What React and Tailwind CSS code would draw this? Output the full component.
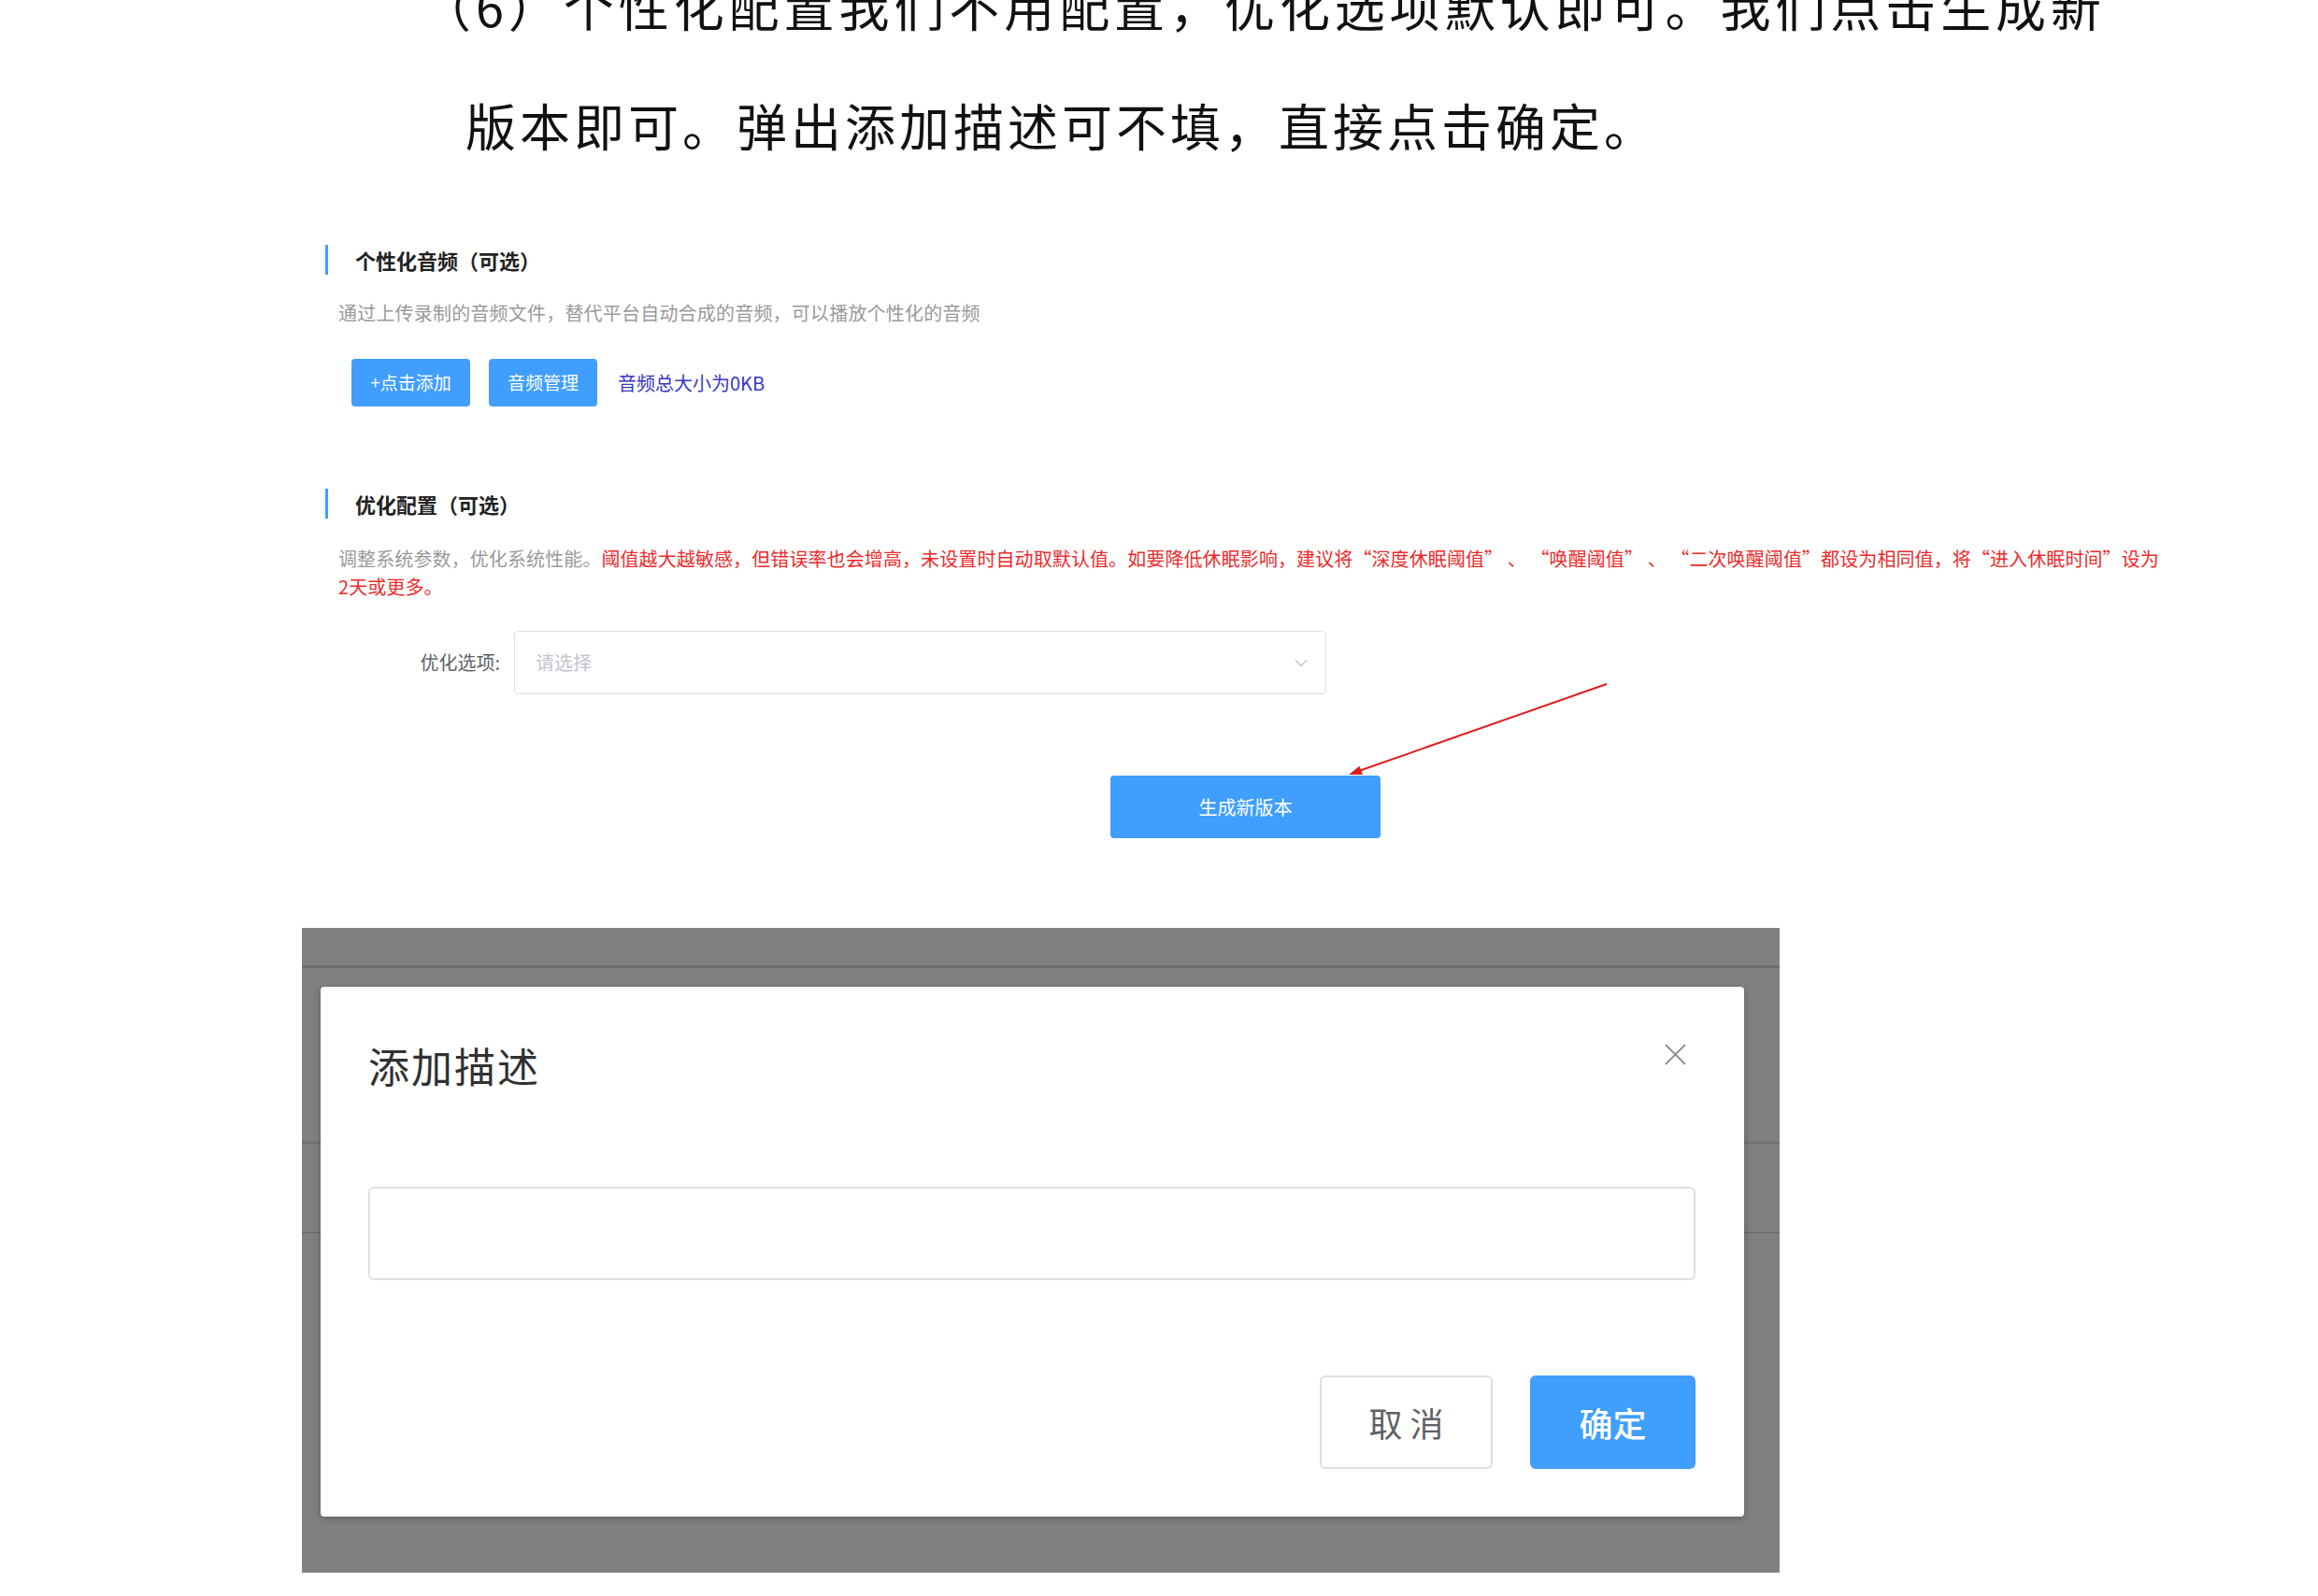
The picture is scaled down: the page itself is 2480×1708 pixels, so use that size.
export default function App() {
  return (
    <div className="w-[2480px] h-[1708px] overflow-hidden bg-white relative flex flex-col font-['Noto_Sans_CJK_SC','Noto_Sans',sans-serif] text-black">
      {/* top document text */}
      <div className="mt-[-58px] ml-[450px] w-[1798px] h-[128px] leading-[128px] text-[54px] text-justify [text-align-last:justify] text-[#111]">
        （6）个性化配置我们不用配置，优化选项默认即可。我们点击生成新
      </div>
      <div className="ml-[498px] h-[128px] leading-[128px] text-[54px] tracking-[4px] text-[#111]">
        版本即可。弹出添加描述可不填，直接点击确定。
      </div>

      {/* form screenshot */}
      <div className="ml-[348px] flex flex-col">
        <div className="mt-[64px] flex items-center h-[32px]">
          <div className="w-[3px] h-[32px] bg-[#409eff]" />
          <span className="ml-[29px] text-[22px] font-bold text-[#222]">个性化音频（可选）</span>
        </div>
        <div className="mt-[26px] ml-[14px] text-[20px] leading-[30px] tracking-[0.2px] text-[#9a9a9a]">
          通过上传录制的音频文件，替代平台自动合成的音频，可以播放个性化的音频
        </div>
        <div className="mt-[34px] ml-[28px] flex items-center">
          <div className="w-[127px] h-[51px] rounded-[4px] bg-[#409eff] text-white text-[19px] flex items-center justify-center">
            +点击添加
          </div>
          <div className="ml-[20px] w-[116px] h-[51px] rounded-[4px] bg-[#409eff] text-white text-[19px] flex items-center justify-center">
            音频管理
          </div>
          <span className="ml-[22px] text-[20px] text-[#3b35c8]">音频总大小为0KB</span>
        </div>

        <div className="mt-[88px] flex items-center h-[32px]">
          <div className="w-[3px] h-[32px] bg-[#409eff]" />
          <span className="ml-[29px] text-[22px] font-bold text-[#222]">优化配置（可选）</span>
        </div>
        <div className="mt-[28px] ml-[14px] w-[2040px] text-[20px] leading-[30px] tracking-[0.1px] whitespace-pre">
          <span className="text-[#9a9a9a]">调整系统参数，优化系统性能。</span>
          <span className="text-[#ee2a2a]">
            {"阈值越大越敏感，但错误率也会增高，未设置时自动取默认值。如要降低休眠影响，建议将“深度休眠阈值” 、 “唤醒阈值” 、 “二次唤醒阈值”都设为相同值，将“进入休眠时间”设为"}
          </span>
          <br />
          <span className="text-[#ee2a2a]">2天或更多。</span>
        </div>

        <div className="mt-[32px] flex items-center">
          <div className="w-[187px] text-right text-[20px] text-[#606266]">优化选项:</div>
          <div className="ml-[15px] w-[869px] h-[68px] border border-[#dcdfe6] rounded-[4px] flex items-center justify-between pl-[22px] pr-[19px] bg-white">
            <span className="text-[20px] text-[#c0c4cc]">请选择</span>
            <svg width="14" height="9" viewBox="0 0 14 9" fill="none">
              <path d="M1 1.5 L7 7.5 L13 1.5" stroke="#c0c4cc" strokeWidth="1.5" />
            </svg>
          </div>
        </div>

        <div className="mt-[87px] ml-[840px] w-[289px] h-[67px] rounded-[4px] bg-[#409eff] text-white text-[20px] flex items-center justify-center">
          生成新版本
        </div>
      </div>

      {/* red annotation arrow */}
      <svg className="absolute left-[1420px] top-[720px] pointer-events-none" width="320" height="130" viewBox="0 0 320 130">
        <line x1="299" y1="12" x2="34" y2="105" stroke="#e01e1e" strokeWidth="2" />
        <polygon points="23,109 37.9,109.1 34.5,99.7" fill="#e01e1e" />
      </svg>

      {/* dialog screenshot */}
      <div className="mt-[96px] ml-[323px] w-[1581px] h-[690px] bg-[#808080] relative flex flex-col">
        <div className="h-[43px] border-b-[3px] border-[#6e6e6e]" />
        <div className="absolute left-0 right-0 top-[229px] h-[2px] bg-[#6f6f6f]" />
        <div className="absolute left-0 right-0 top-[325px] h-[2px] bg-[#6f6f6f]" />
        <div className="relative z-10 mt-[20px] ml-[20px] w-[1523px] h-[567px] bg-white rounded-[4px] shadow-[0_2px_8px_rgba(0,0,0,0.25)] flex flex-col pl-[51px] pr-[52px]">
          <div className="pt-[59px] flex justify-between items-start">
            <div className="h-[50px] leading-[50px] text-[44px] tracking-[2px] text-[#303133]">添加描述</div>
            <svg className="mr-[8px]" width="27" height="27" viewBox="0 0 27 27" fill="none">
              <path d="M3 3 L24 24 M24 3 L3 24" stroke="#909399" strokeWidth="2" />
            </svg>
          </div>
          <div className="mt-[105px] h-[100px] border-[2px] border-[#dcdfe6] rounded-[6px] bg-white" />
          <div className="mt-[102px] flex justify-end gap-[40px]">
            <div className="w-[185px] h-[100px] border-[2px] border-[#dcdfe6] rounded-[6px] bg-white flex items-center justify-center text-[36px] text-[#606266]">
              取 消
            </div>
            <div className="w-[177px] h-[100px] rounded-[6px] bg-[#409eff] flex items-center justify-center text-[36px] text-white font-medium">
              确定
            </div>
          </div>
        </div>
      </div>
    </div>
  );
}
